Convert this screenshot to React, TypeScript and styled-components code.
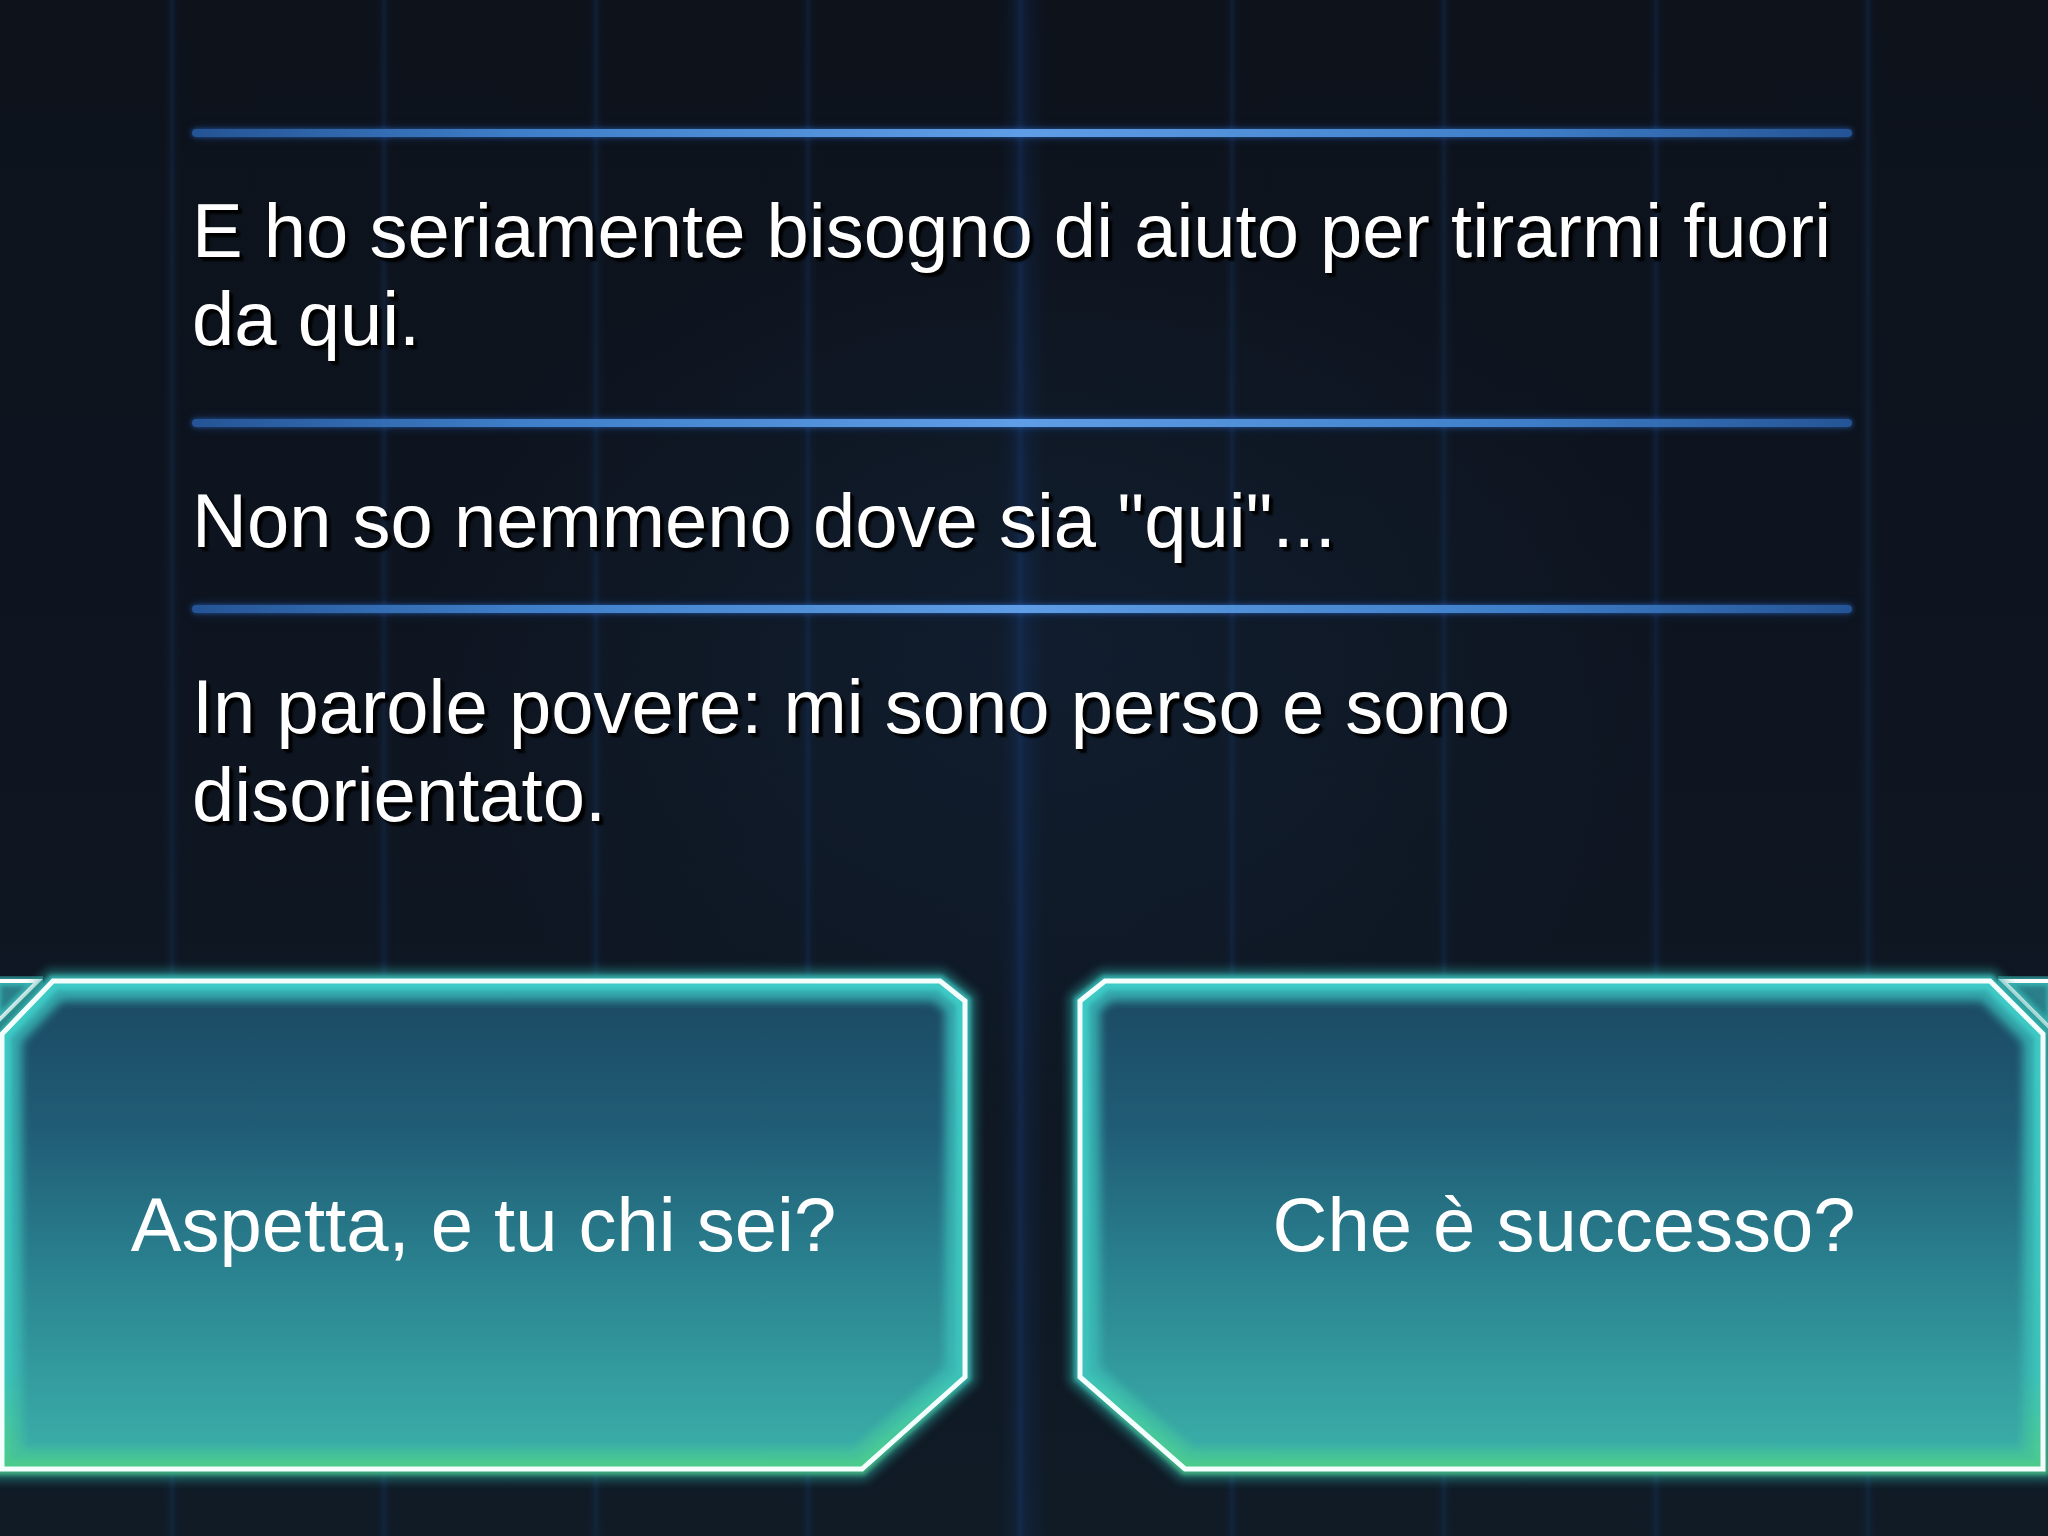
import React from 'react';
import styled, { createGlobalStyle } from 'styled-components';

const Global = createGlobalStyle`
  html, body {
    margin: 0;
    padding: 0;
    background: #0d131c;
  }
  body {
    width: 2048px;
    height: 1536px;
    overflow: hidden;
    font-family: "Liberation Sans", Arial, Helvetica, sans-serif;
  }
`;

const Screen = styled.main`
  width: 2048px;
  height: 1536px;
  overflow: hidden;
  display: flex;
  flex-direction: column;
  background-color: #0d131c;
  background-image:
    linear-gradient(90deg, transparent 1000px, rgba(25, 75, 160, 0.16) 1023px, transparent 1046px),
    repeating-linear-gradient(
      90deg,
      transparent 0px,
      transparent 163px,
      rgba(22, 58, 110, 0.08) 168px,
      rgba(28, 72, 140, 0.22) 172px,
      rgba(22, 58, 110, 0.08) 176px,
      transparent 181px,
      transparent 212px
    ),
    radial-gradient(ellipse 900px 700px at 1050px 650px, rgba(22, 45, 72, 0.35), transparent 70%),
    linear-gradient(180deg, #0d121b 0%, #0e1622 60%, #101b26 100%);
`;

const Dialogue = styled.section`
  display: flex;
  flex-direction: column;
  padding: 129px 196px 0 192px;
`;

const Divider = styled.div`
  height: 8px;
  border-radius: 4px;
  background: linear-gradient(
    90deg,
    rgba(40, 95, 170, 0.85) 0%,
    #3f7fc9 20%,
    #5f9ee6 50%,
    #3f7fc9 80%,
    rgba(40, 95, 170, 0.85) 100%
  );
  box-shadow: 0 0 5px rgba(50, 120, 220, 0.6), 0 0 12px rgba(40, 100, 200, 0.25);
`;

const Line = styled.p<{ $after: number }>`
  margin: 50px 0 ${(p) => p.$after}px;
  font-size: 76px;
  line-height: 88px;
  color: #ffffff;
  text-shadow: 4px 4px 2px rgba(0, 0, 0, 0.95), 2px 2px 0 #000;
`;

const ChoiceRow = styled.div`
  margin-top: 132px;
  display: flex;
  gap: 95px;
  height: 508px;
`;

const Choice = styled.button<{ $w: number; $padL: number; $padR: number }>`
  position: relative;
  flex: 0 0 ${(p) => p.$w}px;
  height: 508px;
  display: flex;
  align-items: center;
  justify-content: center;
  padding: 0 ${(p) => p.$padR}px 0 ${(p) => p.$padL}px;
  margin: 0;
  border: 0;
  background: none;
  cursor: pointer;
  font: inherit;
  color: #fff;
`;

const Frame = styled.svg`
  position: absolute;
  left: 0;
  top: 0;
  overflow: visible;
  pointer-events: none;
`;

const Label = styled.span`
  position: relative;
  font-family: "Liberation Sans", Arial, Helvetica, sans-serif;
  font-size: 76px;
  line-height: 1;
  color: #ffffff;
  white-space: nowrap;
`;

type ChoiceProps = {
  id: string;
  width: number;
  points: string;
  deco: string;
  label: string;
  padL: number;
  padR: number;
};

function ChoiceButton({ id, width, points, deco, label, padL, padR }: ChoiceProps) {
  return (
    <Choice $w={width} $padL={padL} $padR={padR}>
      <Frame width={width} height={508} viewBox={`0 0 ${width} 508`}>
        <defs>
          <linearGradient id={`${id}-fill`} x1="0" y1="0" x2="0" y2="1">
            <stop offset="0" stopColor="#1b4862" />
            <stop offset="0.3" stopColor="#205c75" />
            <stop offset="0.6" stopColor="#2a8390" />
            <stop offset="1" stopColor="#3cb2ab" />
          </linearGradient>
          <linearGradient id={`${id}-glow`} x1="0" y1="0" x2="0" y2="1">
            <stop offset="0" stopColor="#3dcac6" />
            <stop offset="0.8" stopColor="#3cc2ba" />
            <stop offset="1" stopColor="#4ccb8c" />
          </linearGradient>
          <clipPath id={`${id}-clip`}>
            <polygon points={points} />
          </clipPath>
          <filter id={`${id}-blur`} x="-10%" y="-10%" width="120%" height="120%">
            <feGaussianBlur stdDeviation="5" />
          </filter>
          <filter id={`${id}-soft`} x="-10%" y="-10%" width="120%" height="120%">
            <feGaussianBlur stdDeviation="2" />
          </filter>
        </defs>
        <polygon points={deco} fill="#2a7f88" />
        <polygon
          points={deco}
          fill="none"
          stroke="#3cc8c2"
          strokeWidth={10}
          opacity={0.7}
          filter={`url(#${id}-soft)`}
        />
        <polygon points={deco} fill="none" stroke="#ffffff" strokeWidth={4} />
        <polygon
          points={points}
          fill="none"
          stroke="#2a9c9a"
          strokeWidth={24}
          opacity={0.5}
          filter={`url(#${id}-blur)`}
        />
        <polygon
          points={points}
          fill="none"
          stroke={`url(#${id}-glow)`}
          strokeWidth={12}
          opacity={0.75}
          filter={`url(#${id}-soft)`}
        />
        <polygon points={points} fill={`url(#${id}-fill)`} />
        <g clipPath={`url(#${id}-clip)`}>
          <polygon
            points={points}
            fill="none"
            stroke={`url(#${id}-glow)`}
            strokeWidth={40}
            opacity={0.75}
            filter={`url(#${id}-blur)`}
          />
          <polygon
            points={points}
            fill="none"
            stroke={`url(#${id}-glow)`}
            strokeWidth={18}
            filter={`url(#${id}-soft)`}
          />
        </g>
        <polygon points={points} fill="none" stroke="#f4fffd" strokeWidth={5} />
      </Frame>
      <Label>{label}</Label>
    </Choice>
  );
}

const entries = [
  { text: 'E ho seriamente bisogno di aiuto per tirarmi fuori da qui.', after: 56 },
  { text: 'Non so nemmeno dove sia "qui"...', after: 40 },
  { text: 'In parole povere: mi sono perso e sono disorientato.', after: 0 },
];

export default function App() {
  return (
    <>
      <Global />
      <Screen>
        <Dialogue>
          {entries.map((e, i) => (
            <React.Fragment key={i}>
              <Divider />
              <Line $after={e.after}>{e.text}</Line>
            </React.Fragment>
          ))}
        </Dialogue>
        <ChoiceRow>
          <ChoiceButton
            id="left"
            width={975}
            points="53,10 940,10 965,30 965,406 862,498 2,498 2,63"
            deco="-4,10 38,10 -4,52"
            label="Aspetta, e tu chi sei?"
            padL={0}
            padR={8}
          />
          <ChoiceButton
            id="right"
            width={978}
            points="35,10 920,10 973,63 973,498 115,498 10,406 10,30"
            deco="933,10 982,10 982,59"
            label="Che è successo?"
            padL={10}
            padR={0}
          />
        </ChoiceRow>
      </Screen>
    </>
  );
}
